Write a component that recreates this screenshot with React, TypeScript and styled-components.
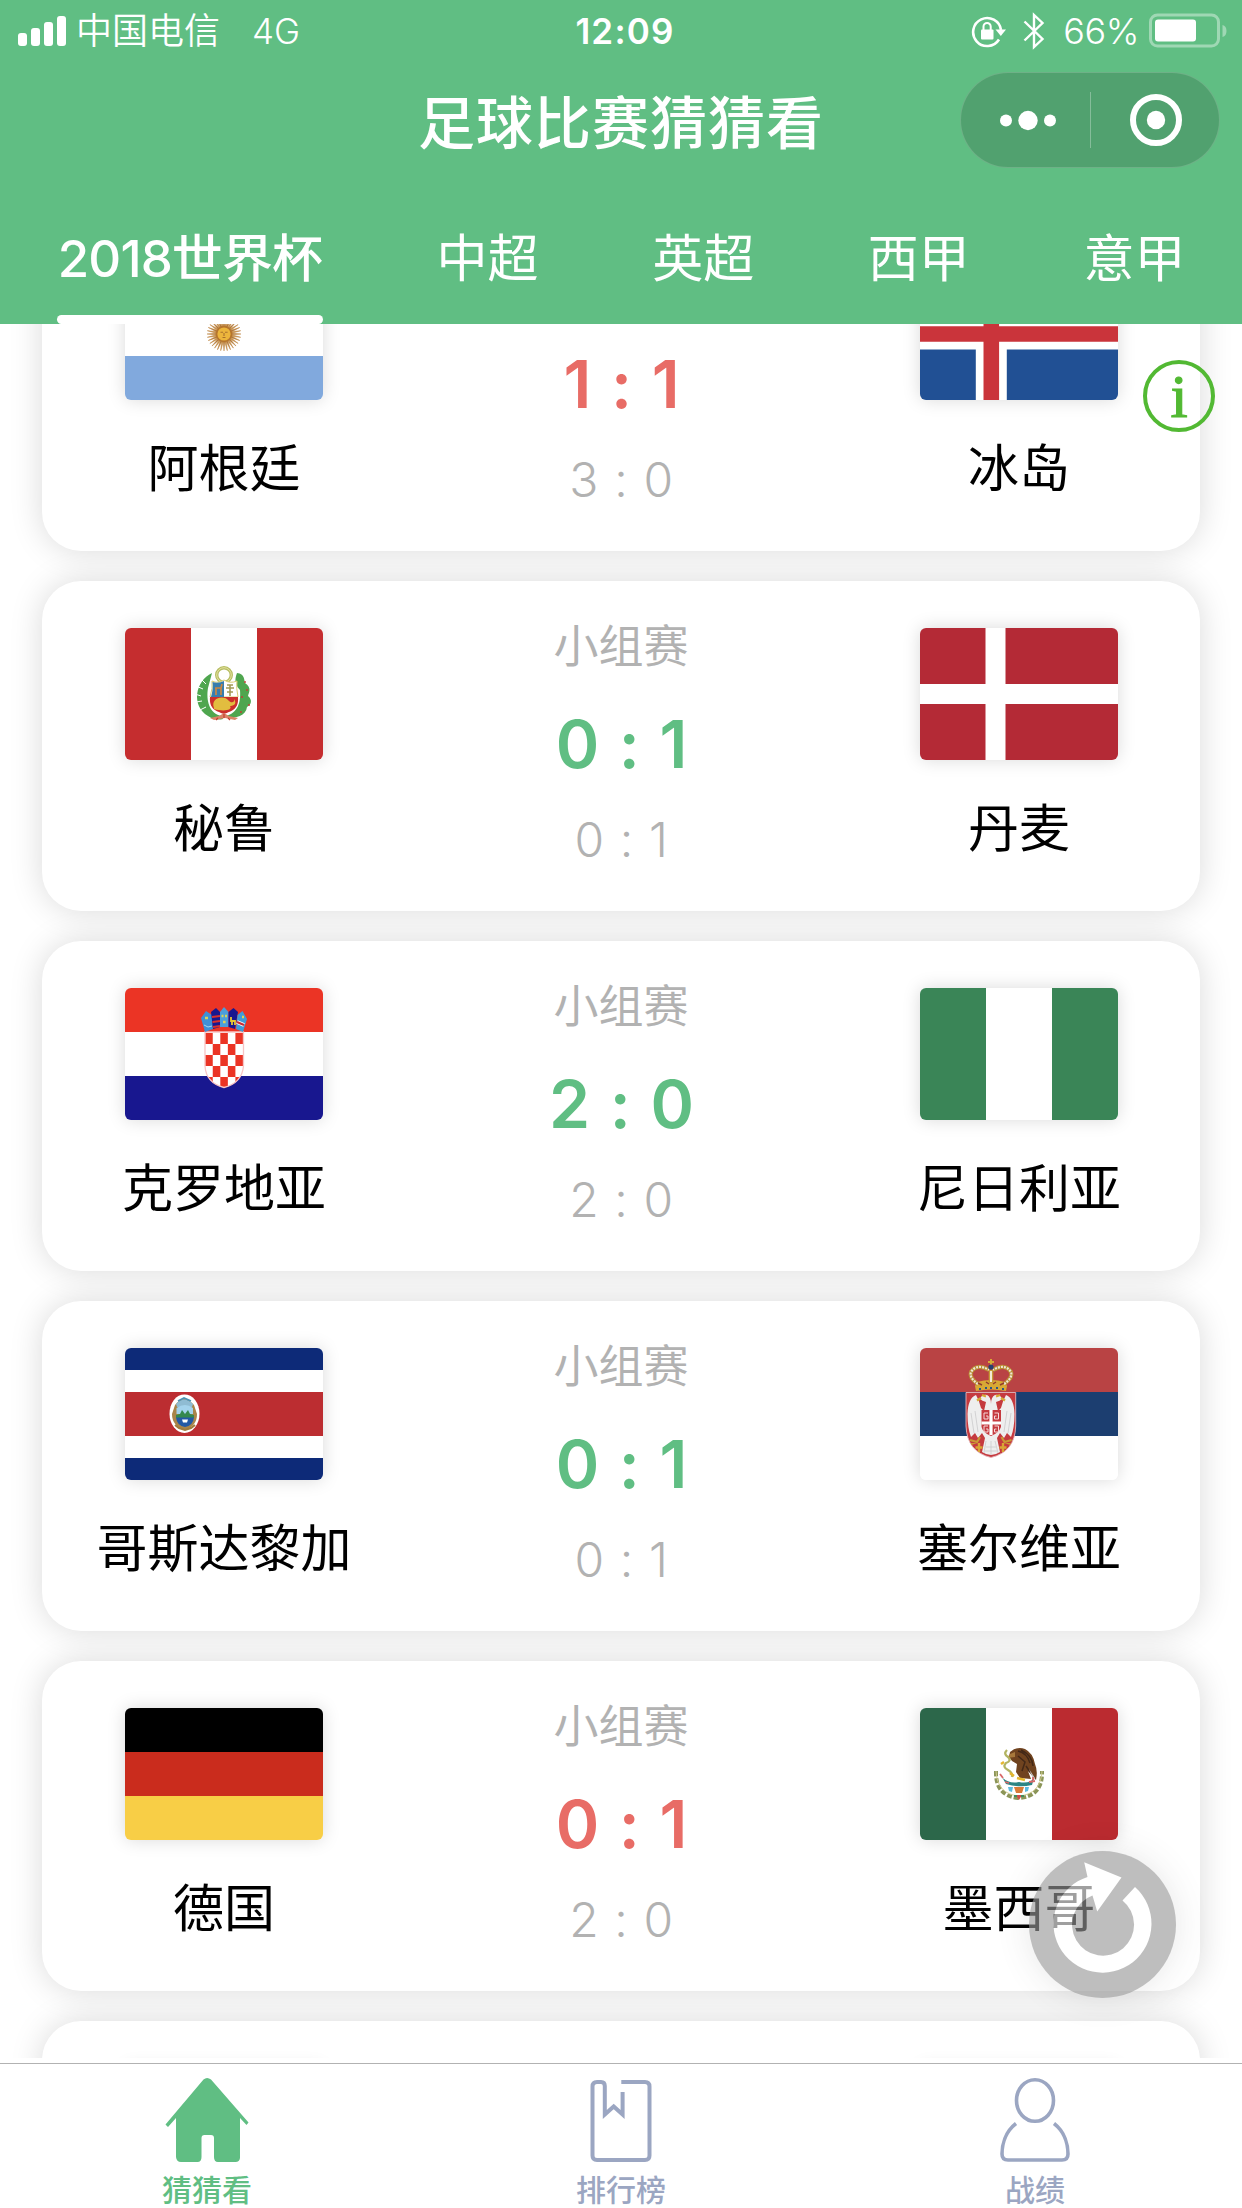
import React from "react";
import styled, { createGlobalStyle } from "styled-components";

const GREEN = "#60be83";
const RED = "#e86c66";
const GREY = "#b2b2b2";
const SLATE = "#9ba6c2";

const GlobalStyle = createGlobalStyle`
  * { box-sizing: border-box; }
  html, body { margin: 0; padding: 0; background: #fff; }
  body {
    font-family: Inter, "Noto Sans CJK SC", sans-serif;
    font-feature-settings: "calt" 0;
    color: #000;
  }
  svg { display: block; }
`;

const Screen = styled.main`
  position: relative;
  width: 1242px;
  height: 2208px;
  overflow: hidden;
  display: flex;
  flex-direction: column;
  background: #fff;
`;

const Header = styled.header`
  flex: none;
  height: 324px;
  background: ${GREEN};
  color: #fff;
  display: flex;
  flex-direction: column;
`;

const StatusBar = styled.div`
  display: grid;
  grid-template-columns: 1fr auto 1fr;
  align-items: center;
  height: 62px;
  padding: 0 15px 0 18px;
  font-size: 36px;
  line-height: 62px;
`;

const StatusLeft = styled.div`
  display: flex;
  align-items: center;
`;

const Carrier = styled.span`
  margin-left: 9px;
  font-weight: 350;
`;

const Network = styled.span`
  margin-left: 32px;
  font-size: 35px;
  font-weight: 350;
`;

const Clock = styled.span`
  padding-left: 5px;
  font-size: 35px;
  font-weight: 600;
  letter-spacing: 1.2px;
`;

const StatusRight = styled.div`
  display: flex;
  justify-content: flex-end;
  align-items: center;
`;

const BluetoothSlot = styled.span`
  margin: 0 18px 0 16px;
`;

const Percent = styled.span`
  margin-right: 10px;
  font-size: 36px;
  font-weight: 350;
  letter-spacing: -0.4px;
`;

const NavBar = styled.div`
  display: grid;
  grid-template-columns: 1fr auto 1fr;
  align-items: center;
  height: 116px;
  padding: 0 22px;
`;

const Title = styled.h1`
  grid-column: 2;
  margin: 8px 0 0;
  font-size: 57px;
  line-height: 80px;
  font-weight: 500;
  letter-spacing: 1px;
`;

const Capsule = styled.div`
  justify-self: end;
  display: flex;
  align-items: center;
  width: 260px;
  height: 96px;
  border-radius: 48px;
  border: 1px solid rgba(255, 255, 255, 0.16);
  background: rgba(0, 0, 0, 0.15);
`;

const CapsuleHalf = styled.span`
  flex: 1;
  display: flex;
  justify-content: center;
  padding-left: 3px;
`;

const CapsuleDivider = styled.span`
  width: 1px;
  height: 56px;
  background: rgba(255, 255, 255, 0.3);
`;

const Tabs = styled.nav`
  flex: 1;
  display: flex;
  align-items: flex-end;
  gap: 113.6px;
  padding-left: 57px;
`;

const Tab = styled.div<{ $active?: boolean }>`
  display: flex;
  flex-direction: column;
  align-items: center;
  width: ${(p) => (p.$active ? 266 : 102)}px;
  font-size: 51px;
  line-height: 72px;
  font-weight: ${(p) => (p.$active ? 500 : 400)};
  letter-spacing: ${(p) => (p.$active ? "-0.9px" : "0")};
  white-space: nowrap;

  &::after {
    content: "";
    width: 100%;
    height: 9px;
    margin-top: 20px;
    border-radius: 5px;
    background: ${(p) => (p.$active ? "#fff" : "transparent")};
  }
`;

const Scroller = styled.section`
  flex: none;
  height: 1734px;
  overflow: hidden;
`;

const MatchList = styled.div`
  display: flex;
  flex-direction: column;
  gap: 30px;
  margin-top: -103px;
  padding: 0 42px;
`;

const Card = styled.article`
  flex: none;
  display: grid;
  grid-template-columns: 364px 430px 364px;
  height: 330px;
  border-radius: 39px;
  background: #fff;
  box-shadow: 0 0 33px rgba(0, 0, 0, 0.15);
`;

const Team = styled.div<{ $away?: boolean }>`
  display: flex;
  flex-direction: column;
  align-items: center;
  padding-top: 47px;
  padding-left: ${(p) => (p.$away ? 2 : 0)}px;
`;

const FlagBox = styled.div`
  width: 198px;
  height: 132px;
  border-radius: 6px;
  overflow: hidden;
  box-shadow: 0 0 18px rgba(0, 0, 0, 0.15);
`;

const TeamName = styled.div`
  margin-top: 33px;
  font-size: 51px;
  line-height: 72px;
  white-space: nowrap;
`;

const Result = styled.div`
  display: flex;
  flex-direction: column;
  align-items: center;
  padding-top: 36px;
`;

const Stage = styled.div`
  height: 60px;
  font-size: 45px;
  line-height: 60px;
  color: ${GREY};
`;

const Score = styled.div<{ $hit: boolean }>`
  margin-top: 27px;
  font-size: 66px;
  line-height: 80px;
  font-weight: 600;
  letter-spacing: -1px;
  word-spacing: 5px;
  color: ${(p) => (p.$hit ? GREEN : RED)};
`;

const Guess = styled.div`
  margin-top: 26px;
  font-size: 48px;
  line-height: 60px;
  font-weight: 350;
  letter-spacing: -0.4px;
  word-spacing: 3px;
  color: ${GREY};
`;

const TabBar = styled.footer`
  flex: none;
  display: grid;
  grid-template-columns: repeat(3, 1fr);
  height: 145px;
  margin-top: 5px;
  border-top: 1px solid ${GREY};
  background: #fff;
`;

const TabBarItem = styled.div<{ $active?: boolean }>`
  display: flex;
  flex-direction: column;
  align-items: center;
  padding-top: 12px;
  font-size: 30px;
  line-height: 40px;
  font-weight: 500;
  color: ${(p) => (p.$active ? GREEN : SLATE)};

  span { margin-top: 6px; }
`;

const InfoButton = styled.button`
  position: absolute;
  left: 1143px;
  top: 360px;
  width: 72px;
  height: 72px;
  padding: 0;
  border: 4.5px solid #52b933;
  border-radius: 50%;
  background: transparent;
  color: #52b933;
  font-family: "Liberation Serif", serif;
  font-size: 62px;
  line-height: 56px;
  font-weight: 400;
  -webkit-text-stroke: 1.2px #52b933;
`;

const RefreshButton = styled.button`
  position: absolute;
  left: 1029px;
  top: 1851px;
  width: 147px;
  height: 147px;
  padding: 0;
  border: 0;
  border-radius: 50%;
  background: #989898;
  opacity: 0.625;
  box-shadow: 0 0 33px rgba(0, 0, 0, 0.15);
`;

type Country =
  | "ar" | "is" | "pe" | "dk" | "hr" | "ng" | "cr" | "rs" | "de" | "mx" | "none";

const Sun = () => (
  <g>
    {Array.from({ length: 32 }, (_, i) => (
      <path
        key={i}
        d="M98 60 L99 49 L100 60 Z"
        fill={i % 2 ? "#c9924a" : "#b0783a"}
        transform={`rotate(${i * 11.25} 99 66)`}
        stroke="#bd8645"
        strokeWidth="0.5"
      />
    ))}
    <circle cx="99" cy="66" r="8.3" fill="#b5742d" />
    <circle cx="99" cy="66" r="6.6" fill="#ecb53c" />
    <path d="M95.5 64.3h2.6M100 64.3h2.6M99 65v3M97.5 69.5h3" stroke="#a8702c" strokeWidth="1.1" />
  </g>
);

const PeruArms = () => (
  <g>
    <path d="M87 45 C70 53 66 78 83 88 C89 92 94 92 98 91 L97 88 C84 86 81 72 83 60 Z" fill="#4fa64f" />
    <path d="M71 58l7 3M70 66l6 2M71 74l6-1M75 82l6-3M76 51l5 5" stroke="#fff" strokeWidth="1" />
    <path d="M112 45 C120 46 119 52 120 55 C127 60 124 64 123 68 C128 72 126 77 122 79 C121 88 111 90 101 90 L101 88 C113 85 116 74 115 62 C109 56 110 50 112 45 Z" fill="#4fa64f" />
    <path d="M120 53v2M122 61v2M117 68v2M124 76v2M116 83v2" stroke="#c63b34" strokeWidth="1.4" />
    <circle cx="99" cy="47" r="7.3" fill="none" stroke="#b6bd62" strokeWidth="3.4" />
    <circle cx="99" cy="47" r="7.3" fill="none" stroke="#e6e2a0" strokeWidth="1" />
    <path d="M87 53 Q93 56 99 52 Q105 56 112 53 Q111 60 113 69 H85 Q88 60 87 53Z" fill="#fff" stroke="#d9cc72" strokeWidth="1" />
    <path d="M87.5 54 Q93 56 99 53 V69 H86 Q88.500 60 87.500 54Z" fill="#377dad" />
    <path d="M90 60h6v7M91 60v7M96 60l1-4" stroke="#c98642" strokeWidth="1.700" fill="none" />
    <path d="M105 68v-11M101 60h8M102 57h6M102 64h6" stroke="#a39b56" strokeWidth="1.6" />
    <path d="M85 69 H113 C114 81 107 83 99 86 C91 83 84 81 85 69Z" fill="#cb2f2c" />
    <path d="M89 80 C85 70 99 66 104 73 C106 75 110 75 109 71 C113 77 107 78 105 78 C108 82 99 84 89 81Z" fill="#e2bd3f" />
    <path d="M85 90l9-2 5-3 5 3 9 2-3 2-10-2-11 2Z" fill="#d98466" />
    <path d="M91 92l2-2M105 92l-2-2M99 86v4" stroke="#c63b34" strokeWidth="1.2" />
  </g>
);

const CroatiaArms = () => (
  <g>
    <clipPath id="hr-shield">
      <path d="M80 44 H118.500 V78 Q117 95 99 99.500 Q81 95 80 78Z" />
    </clipPath>
    <g clipPath="url(#hr-shield)">
      <rect x="79" y="43" width="41" height="58" fill="#fff" />
      {Array.from({ length: 25 }, (_, i) =>
        i % 2 === 0 ? (
          <rect
            key={i}
            x={80.2 + (i % 5) * 7.55}
            y={45 + Math.floor(i / 5) * 11}
            width="7.55"
            height="11"
            fill="#eb3425"
          />
        ) : null
      )}
    </g>
    <path d="M80 44 H118.500 V78 Q117 95 99 99.500 Q81 95 80 78Z" fill="none" stroke="#f8c4c4" strokeWidth="1.3" />
    <path d="M76 30l5-7 6 4 1 14-8 3Z" fill="#3f8fd6" />
    <path d="M86 24l5-4 4 4v15l-7 2Z" fill="#18178f" />
    <path d="M87 29l8-1M87.500 34l7.500-1M88 39l7-1" stroke="#d9302c" strokeWidth="2.2" />
    <path d="M95 24l4-5 4.500 5v15h-8.500Z" fill="#4b9edb" />
    <path d="M103.500 24l5-4 4.500 4-3 17-6.500-2Z" fill="#18178f" />
    <path d="M112.500 27l5-4 4.500 8-4 13-7-3Z" fill="#3f9bd9" />
    <path d="M112 34l7 3" stroke="#fff" strokeWidth="4" />
    <path d="M112 34l7 3" stroke="#c92a35" strokeWidth="2" />
    <path d="M80 30h3M96.500 28h2M100 28h2M98 34h2.600M117 29h2" stroke="#dbd258" strokeWidth="2.600" />
    <path d="M106 29v4h4v4M107 33v4" stroke="#e9c832" strokeWidth="1.8" fill="none" />
    <path d="M79 37l4 2 4-1" stroke="#a6d6ef" strokeWidth="1" fill="none" />
  </g>
);

const CostaRicaArms = () => (
  <g>
    <ellipse cx="59.500" cy="65.700" rx="15" ry="19.300" fill="#fff" />
    <path d="M50 57 Q59 45 69 57 L72 66 Q72 78 60 82 Q47 78 47 66Z" fill="#a9844a" />
    <path d="M51 56 Q59 47 68 56 L67 59 H52Z" fill="#8fbcd3" />
    <path d="M53 53l6-3 7 3" stroke="#4d93b5" strokeWidth="1.8" fill="none" />
    <path d="M51.500 60 Q60 54 68 60 V66 H51.500Z" fill="#a3d3ec" />
    <path d="M51 70 V67 l4-1 2-4 3 4 3-4 2 4 4 1v3Z" fill="#34884e" />
    <path d="M51 69.500 H69 Q68 78 60 79 Q52 78 51 69.500Z" fill="#2459a5" />
    <path d="M57 71.500h6l-1 3h-4Z" fill="#fff" />
    <path d="M50 77l4 3 6 2 6-2 4-3" stroke="#a07b3d" strokeWidth="2" fill="none" />
  </g>
);

const SerbiaArms = () => (
  <g>
    <path d="M46 44.500 H95.700 V78 Q95 104 71 109.500 Q47 104 46 78Z" fill="#c53a3f" stroke="#e5b7bb" strokeWidth="0.9" />
    <path d="M47.500 66 Q48 50 56 47 Q59 52 61 60 L64 63 L66 54 Q62 53 60 51 Q62 46 67 47 Q71 49 71 56 Q71 49 75 47 Q80 46 82 51 Q80 53 76 54 L78 63 L81 60 Q83 52 86 47 Q94 50 94.500 66 Q94.500 80 91 89 L87 85 L84 90 L80 85 L77 90 L80 104 Q71 110 62 104 L65 90 L62 85 L58 90 L55 85 L51 89 Q47.500 80 47.500 66Z" fill="#eeeeee" />
    <path d="M51 65l3 20M55 63l3 21M91 65l-3 20M87 63l-3 21M66 93l-2 12M71 93v14M75 93l3 12M66 99h10M65 103h12" stroke="#cacacc" strokeWidth="0.800" />
    <path d="M61 50l-4 2.500M62 47l4 1.500M81 50l4 2.500M80 47l-4 1.500" stroke="#d6ab36" strokeWidth="2.400" />
    <path d="M61.500 62 H81 V79 Q79 85 71 88 Q63 85 61.500 79Z" fill="#c53a3f" />
    <path d="M71 62v25M61.500 75h19.500" stroke="#fff" strokeWidth="3.200" />
    <path d="M68 65h-4v6h4v-3h-2M74.500 65h4v6h-4v-3h2M68 78h-4v6h4v-3h-2M74.500 78h4v6h-4v-3h2" fill="none" stroke="#f5d9da" strokeWidth="1" />
    <path d="M50 92l7 2 3-5M51 96l6-2M91.500 92l-7 2-3-5M90.500 96l-6-2" fill="none" stroke="#c89a35" strokeWidth="2.200" />
    <path d="M59 95v9M55.500 99.500h7M83 95v9M79.500 99.500h7" fill="none" stroke="#d9a636" strokeWidth="2.400" />
    <path d="M56 43l-1-5 2-4q14-4 28 0l2 4-1 5q-15-3-30 0Z" fill="#d8a935" />
    <path d="M58 36 Q49 30 51 24 Q57 15 69 22 M84 36 Q93 30 91 24 Q85 15 73 22" fill="none" stroke="#b98c35" strokeWidth="4.200" />
    <path d="M58 36 Q49 30 51 24 Q57 15 69 22 M84 36 Q93 30 91 24 Q85 15 73 22" fill="none" stroke="#efe7d6" strokeWidth="2.200" strokeDasharray="2 1.100" />
    <path d="M71 11v8M68 14h6" stroke="#d8a935" strokeWidth="2" />
    <circle cx="71" cy="19" r="2.600" fill="#28416f" />
    <path d="M68.700 22h4.600v13h-4.600Z" fill="#c79a35" />
    <path d="M71 23v11" stroke="#f3ead4" strokeWidth="2" />
    <path d="M59 41h2M65 40h2M70 40h2M76 40h2M82 41h2" stroke="#2a5787" strokeWidth="2" />
    <path d="M58 35l4 2M66 34l3 2M76 34l-3 2M84 35l-4 2" stroke="#8f3d2d" strokeWidth="1.500" />
  </g>
);

const MexicoArms = () => (
  <g>
    <path d="M76 63 Q75 88 99 90 Q123 88 122 63" fill="none" stroke="#8b9558" strokeWidth="4" strokeDasharray="5 2" />
    <path d="M76 63 Q77 86 99 88 Q121 86 122 63" fill="none" stroke="#d4cd91" strokeWidth="0.900" />
    <path d="M90 44 Q97 38 105 41 Q113 45 115 56 Q118 63 116 72 L108 63 L111 71 L100 70 L96 64 L97 56 L92 53 L89 49Z" fill="#70431f" />
    <path d="M98 43 Q107 45 110 55M101 42 Q112 47 113 58M98 48l7 6-3 9M106 58l4 6" stroke="#432817" strokeWidth="1.500" fill="none" />
    <path d="M95 44l-5 2-3 4 8-1Z" fill="#a7783b" />
    <path d="M87 42q-4 4 1 7q4 4-2 6q-4 4 2 7q5 3 4 7" stroke="#b2b462" strokeWidth="2.300" fill="none" />
    <path d="M84 54l-3 2M90 65l4 3M97 70l8 2" stroke="#e4b62f" strokeWidth="2.600" />
    <path d="M109 61l6 9-1 3Z" fill="#c7c4c3" />
    <path d="M82 69 Q88 76 99 74 Q110 76 114 70 L112 77 Q99 80 86 76Z" fill="#2c8584" />
    <path d="M80 66l3 4M85 74l4 1M109 74l6-1M113 69v3" stroke="#d96868" strokeWidth="1.800" />
    <path d="M88 79h5l-1 5-3-1ZM105 79h4l-1 4-3 1Z" fill="#5cbbe0" />
    <path d="M94 79h10l-2 6h-6Z" fill="#d97b37" />
    <path d="M96 87l3 5 3-5Z" fill="#d04a47" />
    <path d="M94 88h3M101 88h3" stroke="#438c5c" strokeWidth="2" />
  </g>
);

const HStripes = ({ colors }: { colors: string[] }) => (
  <>
    {colors.map((c, i) => (
      <rect key={i} x="0" y={(132 / colors.length) * i} width="198" height={132 / colors.length} fill={c} />
    ))}
  </>
);

const VStripes = ({ colors }: { colors: string[] }) => (
  <>
    {colors.map((c, i) => (
      <rect key={i} x={66 * i} y="0" width="66" height="132" fill={c} />
    ))}
  </>
);

const flags: Record<Country, React.ReactNode> = {
  ar: (<><HStripes colors={["#81a9dd", "#fff", "#81a9dd"]} /><Sun /></>),
  is: (
    <>
      <rect width="198" height="132" fill="#215094" />
      <path d="M71.300 0v132M0 66h198" stroke="#fff" strokeWidth="31" />
      <path d="M71.300 0v132M0 66h198" stroke="#ca343b" strokeWidth="15.600" />
    </>
  ),
  pe: (<><VStripes colors={["#c52d2f", "#fff", "#c52d2f"]} /><PeruArms /></>),
  dk: (
    <>
      <rect width="198" height="132" fill="#b42a36" />
      <path d="M75.500 0v132M0 66h198" stroke="#fff" strokeWidth="20" />
    </>
  ),
  hr: (<><HStripes colors={["#eb3425", "#fff", "#18178f"]} /><CroatiaArms /></>),
  ng: <VStripes colors={["#3a8557", "#fff", "#3a8557"]} />,
  cr: (
    <>
      <HStripes colors={["#0d2a78", "#fff", "#bc2d31", "#bc2d31", "#fff", "#0d2a78"]} />
      <CostaRicaArms />
    </>
  ),
  rs: (<><HStripes colors={["#b94344", "#1c3e70", "#fff"]} /><SerbiaArms /></>),
  de: <HStripes colors={["#000", "#ca2c1d", "#f8ce46"]} />,
  mx: (<><VStripes colors={["#2c674a", "#fff", "#bb2b30"]} /><MexicoArms /></>),
  none: null,
};

const Flag = ({ country }: { country: Country }) => (
  <FlagBox>
    <svg width="198" height="132" viewBox="0 0 198 132">{flags[country]}</svg>
  </FlagBox>
);

interface Match {
  home: [Country, string];
  away: [Country, string];
  stage?: string;
  score: string;
  guess: string;
  hit: boolean;
}

const matches: Match[] = [
  { home: ["ar", "阿根廷"], away: ["is", "冰岛"], score: "1 : 1", guess: "3 : 0", hit: false },
  { home: ["pe", "秘鲁"], away: ["dk", "丹麦"], stage: "小组赛", score: "0 : 1", guess: "0 : 1", hit: true },
  { home: ["hr", "克罗地亚"], away: ["ng", "尼日利亚"], stage: "小组赛", score: "2 : 0", guess: "2 : 0", hit: true },
  { home: ["cr", "哥斯达黎加"], away: ["rs", "塞尔维亚"], stage: "小组赛", score: "0 : 1", guess: "0 : 1", hit: true },
  { home: ["de", "德国"], away: ["mx", "墨西哥"], stage: "小组赛", score: "0 : 1", guess: "2 : 0", hit: false },
];

const MatchCard = ({ match }: { match: Match }) => (
  <Card>
    <Team>
      <Flag country={match.home[0]} />
      <TeamName>{match.home[1]}</TeamName>
    </Team>
    <Result>
      <Stage>{match.stage}</Stage>
      <Score $hit={match.hit}>{match.score}</Score>
      <Guess>{match.guess}</Guess>
    </Result>
    <Team $away>
      <Flag country={match.away[0]} />
      <TeamName>{match.away[1]}</TeamName>
    </Team>
  </Card>
);

const SignalIcon = () => (
  <svg width="49" height="32" viewBox="0 0 49 32" fill="#fff">
    <rect x="0" y="18" width="9" height="13" rx="3" />
    <rect x="13" y="13" width="9" height="18" rx="3" />
    <rect x="26" y="7" width="9" height="24" rx="3" />
    <rect x="39" y="1" width="9" height="30" rx="3" />
  </svg>
);

const RotationLockIcon = () => (
  <svg width="36" height="34" viewBox="0 0 36 34" fill="none" stroke="#fff">
    <path d="M28 25.500 A14 14 0 1 1 30 16" strokeWidth="2.600" />
    <path d="M24.500 15.500h10.500l-5.200 6.500Z" fill="#fff" stroke="none" />
    <rect x="10" y="15.500" width="12.500" height="10" rx="1" fill="#fff" stroke="none" />
    <path d="M12.500 16v-3.500a3.600 3.600 0 0 1 7.200 0V16" strokeWidth="2" />
  </svg>
);

const BluetoothIcon = () => (
  <svg width="22" height="38" viewBox="0 0 22 38" fill="none" stroke="#fff" strokeWidth="2.400">
    <path d="M1.500 9.500 L19.500 27 L11 35 V3 L19.500 11 L1.500 28.500" />
  </svg>
);

const BatteryIcon = () => (
  <svg width="78" height="36" viewBox="0 0 78 36">
    <rect x="1.500" y="2" width="68" height="31" rx="7" fill="none" stroke="#fff" strokeOpacity="0.4" strokeWidth="3" />
    <rect x="6" y="6.500" width="41" height="22" rx="3" fill="#fff" />
    <path d="M73.500 12 Q77.500 13 77.500 18 Q77.500 23 73.500 24Z" fill="#fff" fillOpacity="0.4" />
  </svg>
);

const HomeIcon = () => (
  <svg width="84" height="88" viewBox="165 2076 84 88">
    <path
      d="M203.500 2079.500 Q207 2076.500 211 2079.500 L248.500 2122.500 L246.500 2125 L240 2118 V2158 Q239.500 2162 235.500 2162 H218 Q214 2162 214 2157 V2138 Q214 2135 211 2135 H204.500 Q201.500 2135 201.500 2138 V2157 Q201.500 2162 197.500 2162 H181 Q176.500 2162 176 2157 V2118 L168 2127 L165.500 2124.500 Z"
      fill={GREEN}
    />
  </svg>
);

const RankIcon = () => (
  <svg width="64" height="88" viewBox="589 2076 64 88" fill="none" stroke={SLATE} strokeWidth="4">
    <path d="M621.300 2082 H645 Q649.500 2082 649.500 2086.500 V2155.500 Q649.500 2160 645 2160 H597 Q592.500 2160 592.500 2155.500 V2086.500 Q592.500 2082 597 2082 H601 Q604.800 2082 604.800 2086 V2114.500 L613.700 2106.500 L622.600 2114.500 V2092" />
  </svg>
);

const RecordIcon = () => (
  <svg width="72" height="88" viewBox="999 2076 72 88" fill="none" stroke={SLATE} strokeWidth="3.600">
    <ellipse cx="1035" cy="2100.500" rx="18.500" ry="20.800" />
    <path d="M1016 2123.500 C1005 2132 1002 2145 1002 2154 Q1002 2160 1008 2160 H1062 Q1068 2160 1068 2154 C1068 2145 1065 2132 1054 2123.500" />
  </svg>
);

const RefreshIcon = () => (
  <svg width="147" height="147" viewBox="-73.500 -73.500 147 147">
    <path
      d="M32.500 -37.500 A49 49 0 1 1 -15 -47.500 L-18.300 -62.300 L19 -47 L-5.300 -13 L-10 -29 A31 31 0 1 0 20 -24 Z"
      fill="#fff"
    />
  </svg>
);

const leagues = ["2018世界杯", "中超", "英超", "西甲", "意甲"];

export default function App() {
  return (
    <>
      <GlobalStyle />
      <Screen>
        <Header>
          <StatusBar>
            <StatusLeft>
              <SignalIcon />
              <Carrier>中国电信</Carrier>
              <Network>4G</Network>
            </StatusLeft>
            <Clock>12:09</Clock>
            <StatusRight>
              <RotationLockIcon />
              <BluetoothSlot><BluetoothIcon /></BluetoothSlot>
              <Percent>66%</Percent>
              <BatteryIcon />
            </StatusRight>
          </StatusBar>
          <NavBar>
            <Title>足球比赛猜猜看</Title>
            <Capsule>
              <CapsuleHalf>
                <svg width="60" height="24" viewBox="0 0 60 24" fill="#fff">
                  <circle cx="9" cy="12.500" r="6" />
                  <circle cx="31" cy="12.500" r="9.700" />
                  <circle cx="53" cy="12.500" r="6" />
                </svg>
              </CapsuleHalf>
              <CapsuleDivider />
              <CapsuleHalf>
                <svg width="54" height="54" viewBox="0 0 54 54">
                  <circle cx="27" cy="27" r="23" fill="none" stroke="#fff" strokeWidth="6" />
                  <circle cx="27" cy="27" r="9.200" fill="#fff" />
                </svg>
              </CapsuleHalf>
            </Capsule>
          </NavBar>
          <Tabs>
            {leagues.map((name, i) => (
              <Tab key={name} $active={i === 0}>{name}</Tab>
            ))}
          </Tabs>
        </Header>
        <Scroller>
          <MatchList>
            {matches.map((m) => (
              <MatchCard key={m.home[1]} match={m} />
            ))}
            <Card>
              <Team><Flag country="none" /></Team>
              <Result />
              <Team $away><Flag country="none" /></Team>
            </Card>
          </MatchList>
        </Scroller>
        <TabBar>
          <TabBarItem $active><HomeIcon /><span>猜猜看</span></TabBarItem>
          <TabBarItem><RankIcon /><span>排行榜</span></TabBarItem>
          <TabBarItem><RecordIcon /><span>战绩</span></TabBarItem>
        </TabBar>
        <InfoButton>i</InfoButton>
        <RefreshButton><RefreshIcon /></RefreshButton>
      </Screen>
    </>
  );
}
